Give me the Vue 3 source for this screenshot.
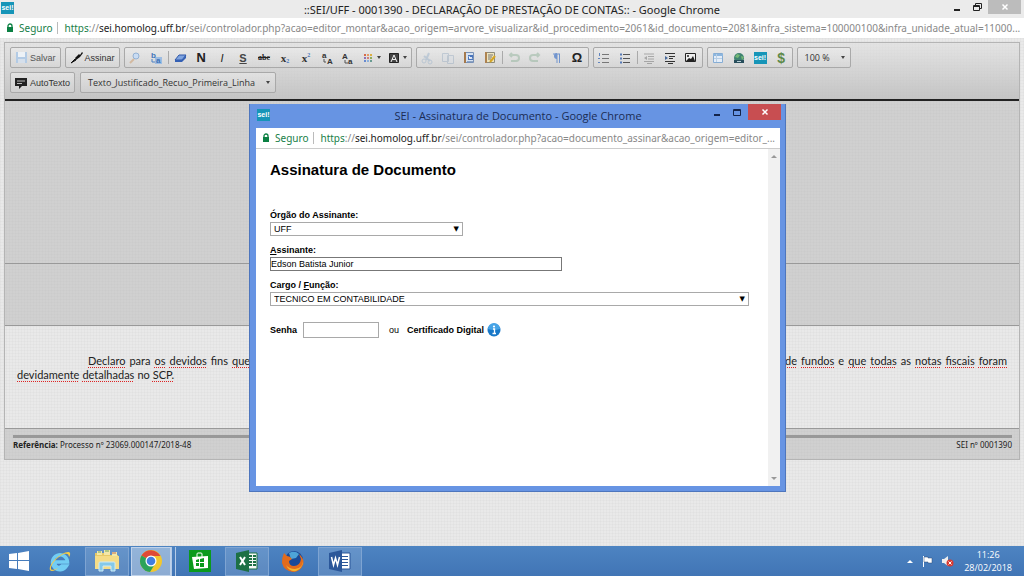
<script setup>
import { ref } from 'vue'

const orgao = ref('UFF')
const assinante = ref('Edson Batista Junior')
const cargo = ref('TECNICO EM CONTABILIDADE')
const senha = ref('')

const lineStart = [
  ['Declaro', 1], ['para', 0], ['os', 1], ['devidos', 1], ['fins', 0], ['que', 1],
]
const lineEnd = [
  ['de', 1], ['fundos', 1], ['e', 0], ['que', 1], ['todas', 1], ['as', 0], ['notas', 1], ['fiscais', 1], ['foram', 1],
]
const lineLast = [['devidamente', 1], ['detalhadas', 1], ['no', 0], ['SCP.', 1]]
</script>

<template>
  <div class="desktop">
    <header class="titlebar">
      <span class="sei">sei!</span>
      <h1>::SEI/UFF - 0001390 - DECLARAÇÃO DE PRESTAÇÃO DE CONTAS:: - Google Chrome</h1>
      <div class="controls">
        <button aria-label="Minimizar"><svg width="12" height="12"><path d="M3 9h6" stroke="#222" stroke-width="2" /></svg></button>
        <button aria-label="Restaurar"><svg width="12" height="12" fill="none" stroke="#222"><path d="M2.500 4.500h6v5h-6zM2 5.500h7M4.500 4v-1.500h6v5H9" /></svg></button>
        <button class="close" aria-label="Fechar"><svg width="8" height="8"><path d="M1.500 1.500l5 5M6.500 1.500l-5 5" stroke="#fff" stroke-width="1.500" /></svg></button>
      </div>
    </header>

    <div class="address">
      <svg class="lock" width="8" height="10"><path d="M2 5V3a2 2 0 0 1 4 0v2" fill="none" stroke="#0b8043" stroke-width="1.300" /><path d="M1 4h6v5H1z" fill="#0b8043" /></svg>
      <span class="secure">Seguro</span>
      <span class="url"><b>https</b>://<i>sei.homolog.uff.br</i>/sei/controlador.php?acao=editor_montar&amp;acao_origem=arvore_visualizar&amp;id_procedimento=2061&amp;id_documento=2081&amp;infra_sistema=100000100&amp;infra_unidade_atual=11000...</span>
    </div>

    <main class="page">
      <div class="editor">
        <div class="toolbar">
          <div class="row">
            <button class="group wide faded">
              <svg width="13" height="13"><path d="M1 1h11v11H1z" fill="#b3cbe5" /><path d="M3 1h7v5H3z" fill="#edf2f7" /><path d="M3 8h7v4H3z" fill="#d5dfeb" /></svg>
              Salvar
            </button>
            <button class="group wide">
              <svg width="13" height="13"><path d="M1 12l4-4 1 1z" fill="#111" stroke="#111" /><path d="M5 7l4-4 1 1 2-3 1 1-3 4-4 3z" fill="#111" /></svg>
              Assinar
            </button>

            <div class="group">
              <button class="tool" aria-label="Localizar"><svg width="14" height="14"><path d="M2 12l4-4" stroke="#d3b9a0" stroke-width="2" /><circle cx="8" cy="5" r="3" fill="#c9dcf3" stroke="#93b1d4" /></svg></button>
              <button class="tool" aria-label="Substituir"><svg width="14" height="14"><path d="M6 6h7v7H6z" fill="#9dbce2" /><text x="2" y="7" class="g blue">b</text><text x="7" y="12" class="g blue">a</text><path d="M3 8v3h3" fill="none" stroke="#4a80c4" /></svg></button>
              <span class="sep"></span>
              <button class="tool" aria-label="Remover formatação"><svg width="14" height="14"><path d="M2 9l4-5h7l-4 5z" fill="#7ea4e0" stroke="#2f57a8" /><path d="M2 9h7l4-5v3l-4 4H2z" fill="#3460b4" /></svg></button>
              <button class="tool strong">N</button>
              <button class="tool italic">I</button>
              <button class="tool under">S</button>
              <button class="tool strike">abc</button>
              <button class="tool serif">x<sub>2</sub></button>
              <button class="tool serif">x<sup>2</sup></button>
              <button class="tool" aria-label="Maiúsculas"><svg width="14" height="14"><text x="2" y="7" class="g">a</text><text x="7" y="13" class="g">A</text><path d="M4 8v3h2" fill="none" stroke="#555" /></svg></button>
              <button class="tool" aria-label="Minúsculas"><svg width="14" height="14"><text x="1" y="8" class="g">A</text><text x="7" y="13" class="g">a</text><path d="M4 9v3h3" fill="none" stroke="#555" /></svg></button>
              <button class="tool drop" aria-label="Cor do texto"><svg width="12" height="14"><path d="M2 3h2v2H2z" fill="#d76a4a" /><path d="M5 3h2v2H5z" fill="#e49b64" /><path d="M8 3h2v2H8z" fill="#dcae42" /><path d="M2 6h2v2H2z" fill="#8d70b7" /><path d="M5 6h2v2H5z" fill="#d38178" /><path d="M8 6h2v2H8z" fill="#8fab5b" /><path d="M2 9h2v2H2z" fill="#678ad0" /><path d="M5 9h2v2H5z" fill="#8cb1dc" /><path d="M8 9h2v2H8z" fill="#699b91" /></svg><span class="caret"></span></button>
              <button class="tool drop" aria-label="Cor de fundo"><svg width="12" height="14"><path d="M1.500 2.500h9v9h-9z" fill="#444" stroke="#222" /><path d="M3 11l3-7 3 7M4 8.500h4" fill="none" stroke="#eee" /></svg><span class="caret"></span></button>
            </div>

            <div class="group">
              <button class="tool faint" aria-label="Recortar"><svg width="14" height="14" fill="none" stroke="#8aa8c7"><path d="M9 2L6 9M4 5l6 5" stroke-width="2" /><circle cx="4" cy="10" r="2" /><circle cx="10" cy="11" r="2" /></svg></button>
              <button class="tool faint" aria-label="Copiar"><svg width="14" height="14" fill="#d9dfe7" stroke="#8ea5bd"><path d="M1.500 2.500h6v8h-6zM6.500 4.500h6v8h-6z" /></svg></button>
              <button class="tool" aria-label="Colar como texto"><svg width="14" height="14"><path d="M2.500 1.500h9v10h-9z" fill="#d7e2f0" stroke="#7891b6" /><path d="M2 1h2v11H2z" fill="#a5794c" /><path d="M6 4h5v5H6z" fill="#4975bc" /><path d="M5 10.500h6" stroke="#8ba2c4" /><path d="M7 5l1 3 1-2 1 2" fill="none" stroke="#fff" /></svg></button>
              <button class="tool" aria-label="Colar do Word"><svg width="14" height="14"><path d="M2.500 1.500h9v10h-9z" fill="#eee4bd" stroke="#8d8b7c" /><path d="M2 1h2v11H2z" fill="#ad8250" /><path d="M5 4h5M5 6h4M5 8h3" stroke="#777" /><path d="M7 11l5-6" stroke="#d5a525" stroke-width="2" /></svg></button>
              <span class="sep"></span>
              <button class="tool faint" aria-label="Desfazer"><svg width="14" height="14"><path d="M3 4h6a3 3 0 0 1 0 6H4M5 2L3 4l2 2" fill="none" stroke="#80a98c" stroke-width="2" /></svg></button>
              <button class="tool faint" aria-label="Refazer"><svg width="14" height="14"><path d="M11 4H5a3 3 0 0 0 0 6h5M9 2l2 2-2 2" fill="none" stroke="#80a98c" stroke-width="2" /></svg></button>
              <button class="tool" aria-label="Mostrar blocos"><svg width="14" height="14"><path d="M4 3h7M8 3v9M10.500 3v9" stroke="#7295ce" /><path d="M8 2v6a3 3 0 0 1 0-6" fill="#7295ce" /></svg></button>
              <button class="tool omega">Ω</button>
            </div>

            <div class="group">
              <button class="tool" aria-label="Lista numerada"><svg width="14" height="14"><path d="M5 3.500h7M5 7.500h7M5 11.500h7" stroke="#777" /><path d="M2.500 2v3M1 7.500h2M1 11.500h2" stroke="#6185bf" /></svg></button>
              <button class="tool" aria-label="Lista"><svg width="14" height="14"><path d="M5 3.500h7M5 7.500h7M5 11.500h7" stroke="#555" /><path d="M2 3.500h2M2 7.500h2M2 11.500h2" stroke="#587bb5" stroke-width="2" /></svg></button>
              <span class="sep"></span>
              <button class="tool faint" aria-label="Diminuir recuo"><svg width="14" height="14"><path d="M2 3h10M6 5.500h6M6 8h6M2 10.500h10M5 12.500h5" stroke="#555" /><path d="M5 5v4L2 7z" fill="#555" /></svg></button>
              <button class="tool" aria-label="Aumentar recuo"><svg width="14" height="14"><path d="M2 2.500h10M6 5.500h6M6 7.500h4M2 10.500h10M5 12.500h5" stroke="#333" /><path d="M2 5v4l3-2z" fill="#46699b" /></svg></button>
              <button class="tool" aria-label="Imagem"><svg width="14" height="14"><path d="M1.500 2.500h10v8h-10z" fill="#eee" stroke="#222" /><path d="M2 10l3-3 2 1 2-3 2 5z" fill="#222" /><circle cx="4" cy="5" r="1" fill="#222" /></svg></button>
            </div>

            <div class="group">
              <button class="tool" aria-label="Tabela"><svg width="14" height="14"><path d="M2.500 2.500h9v9h-9z" fill="#e4edf8" stroke="#86add4" /><path d="M2 4h10" stroke="#8db6de" stroke-width="2" /><path d="M5.500 3v8M3 7.500h8" stroke="#b7cfe6" /></svg></button>
              <button class="tool" aria-label="Link"><svg width="14" height="14"><circle cx="7" cy="7" r="5" fill="#3e8370" /><path d="M5 3l3 1-2 3-3-1zM9 5l3 1-2 3z" fill="#75b875" /><path d="M2 9h10v3H2z" fill="#284e5c" /><path d="M5 10.500h4" stroke="#b7cfd7" /></svg></button>
              <button class="tool" aria-label="Link SEI"><span class="sei">sei!</span></button>
              <button class="tool dollar">$</button>
            </div>

            <button class="group combo">100 %<span class="caret"></span></button>
          </div>

          <div class="row">
            <button class="group wide">
              <svg width="13" height="14"><path d="M0 2h12v8H7l-3 3v-3H0z" fill="#222" /><path d="M2 5h8M2 7.500h5" stroke="#bbb" /></svg>
              AutoTexto
            </button>
            <button class="group combo">Texto_Justificado_Recuo_Primeira_Linha<span class="caret"></span></button>
          </div>
        </div>

        <section class="block head"></section>
        <section class="block second"></section>
        <section class="block body">
          <div class="line">
            <p class="indent"><span v-for="(w, i) in lineStart" :key="i" :class="{ bad: w[1] }">{{ w[0] }}</span></p>
            <p><span v-for="(w, i) in lineEnd" :key="i" :class="{ bad: w[1] }">{{ w[0] }}</span></p>
          </div>
          <p class="last"><span v-for="(w, i) in lineLast" :key="i" :class="{ bad: w[1] }">{{ w[0] }}</span></p>
        </section>
        <section class="block foot">
          <hr>
          <div class="refs">
            <span><strong>Referência:</strong> Processo nº 23069.000147/2018-48</span>
            <span>SEI nº 0001390</span>
          </div>
        </section>
      </div>
    </main>

    <div class="dialog" role="dialog" aria-labelledby="dialog-title">
      <header class="dialog-bar">
        <span class="sei">sei!</span>
        <h2 id="dialog-title">SEI - Assinatura de Documento - Google Chrome</h2>
        <div class="controls">
          <button aria-label="Minimizar"><svg width="12" height="12"><path d="M3 9h6" stroke="#14244a" stroke-width="2" /></svg></button>
          <button aria-label="Maximizar"><svg width="12" height="12" fill="none" stroke="#14244a"><path d="M2.500 3.500h7v6h-7zM2 4.500h8" /></svg></button>
          <button class="close" aria-label="Fechar"><svg width="8" height="8"><path d="M1.500 1.500l5 5M6.500 1.500l-5 5" stroke="#fff" stroke-width="1.500" /></svg></button>
        </div>
      </header>
      <div class="address">
        <svg class="lock" width="8" height="10"><path d="M2 5V3a2 2 0 0 1 4 0v2" fill="none" stroke="#0b8043" stroke-width="1.300" /><path d="M1 4h6v5H1z" fill="#0b8043" /></svg>
        <span class="secure">Seguro</span>
        <span class="url"><b>https</b>://<i>sei.homolog.uff.br</i>/sei/controlador.php?acao=documento_assinar&amp;acao_origem=editor_...</span>
      </div>
      <div class="dialog-body">
        <form class="form" @submit.prevent>
          <h3>Assinatura de Documento</h3>
          <div class="field short">
            <label for="orgao">Órgão do Assinante:</label>
            <span class="select"><select id="orgao" v-model="orgao"><option>UFF</option></select></span>
          </div>
          <div class="field medium">
            <label for="assinante"><u>A</u>ssinante:</label>
            <input id="assinante" v-model="assinante" type="text">
          </div>
          <div class="field">
            <label for="cargo">Cargo / <u>F</u>unção:</label>
            <span class="select"><select id="cargo" v-model="cargo"><option>TECNICO EM CONTABILIDADE</option></select></span>
          </div>
          <div class="auth">
            <label for="senha">Senha</label>
            <input id="senha" v-model="senha" type="password">
            <span class="or">ou</span>
            <a href="#">Certificado Digital</a>
            <svg width="14" height="14"><circle cx="7" cy="7" r="6.500" fill="#1878c8" /><path d="M1 6a6 6 0 0 1 12 0q-6 2-12 0z" fill="#48a4e6" /><path d="M6 6h1.500v4.500M5.500 10.500h3.500" fill="none" stroke="#fff" stroke-width="1.300" /><circle cx="7" cy="3.500" r="1.100" fill="#fff" /></svg>
          </div>
        </form>
        <div class="scroll">
          <svg width="6" height="4"><path d="M0 4l3-3 3 3z" fill="#999" /></svg>
          <svg width="6" height="4"><path d="M0 0l3 3 3-3z" fill="#999" /></svg>
        </div>
      </div>
    </div>

    <footer class="taskbar">
      <button class="task start" aria-label="Iniciar"><svg width="20" height="20" fill="#fff"><path d="M0 3l8-1v7H0zM9 2l11-2v9H9zM0 10h8v8l-8-1zM9 10h11v10L9 18z" /></svg></button>
      <button class="task" aria-label="Internet Explorer"><svg width="24" height="24"><path d="M6 13h13.500A7.500 7.500 0 1 0 18.500 17h-4.500A4 4 0 0 1 7 14" fill="none" stroke="#72cdf4" stroke-width="3.500" /><path d="M2 21C0 15 14 2 21 3c2 1 1 4 0 5 0-3-2-4-5-3C10 7 2 16 3 20c1 2 5 0 7-1-3 3-7 4-8 2z" fill="#f5cc45" /></svg></button>
      <button class="task open" aria-label="Explorador de Arquivos"><svg width="26" height="24"><path d="M1 4h9l2 2h12v14H1z" fill="#e6ca69" /><path d="M3 2h5v4H3zM10 1h6v5h-6zM18 3h5v4h-5z" fill="#f3e7a9" /><path d="M4 3h3M11 2h4" stroke="#69a65c" /><path d="M18 4h4" stroke="#c46e52" /><path d="M1 7h24v13H1z" fill="#f5dc87" /><path d="M5 22v-8q0-1 1-1h14q1 0 1 1v8h-4v-5H9v5z" fill="#85c9e9" stroke="#cdebf7" /></svg></button>
      <button class="task open active" aria-label="Google Chrome"><svg width="22" height="22"><circle cx="11" cy="11" r="11" fill="#f2c72f" /><path d="M11 11L1.500 5.500A11 11 0 0 1 20.500 6H11z" fill="#df4a37" /><path d="M11 11L1.500 5.500A11 11 0 0 0 10 22l5-8z" fill="#2ca35a" /><circle cx="11" cy="11" r="5.500" fill="#fff" /><circle cx="11" cy="11" r="4.300" fill="#427ee0" /></svg></button>
      <span class="stack"></span>
      <button class="task" aria-label="Loja"><svg width="22" height="22"><path d="M0 0h22v22H0z" fill="#0a9a1c" /><path d="M3 7l16-1v12L5 19z" fill="#fff" /><path d="M8 7V4q0-1 1-1h3q1 0 1 1v3" fill="none" stroke="#fff" /><path d="M7 10l3-1v3H7zM11 9l4-1v4h-4zM7 13h3v3H7zM11 13h4v4h-4z" fill="#0a9a1c" /></svg></button>
      <button class="task open" aria-label="Excel"><svg width="22" height="22"><path d="M11 3h10v16H11z" fill="#f4f8f5" stroke="#1d7044" /><path d="M13 6h3M17 6h3M13 9h3M17 9h3M13 12h3M17 12h3M13 15h3M17 15h3" stroke="#1d7044" stroke-width="2" /><path d="M0 3l13-3v22L0 19z" fill="#1d7044" /><path d="M4 7l5 8M9 7l-5 8" stroke="#fff" stroke-width="2" /></svg></button>
      <button class="task" aria-label="Firefox"><svg width="22" height="22"><circle cx="12" cy="10" r="9" fill="#1a4a99" /><path d="M7 3q6-3 10 1l-3 4-5 1z" fill="#4ea4d8" /><path d="M2 3l3 3q3 0 5 3l-3 2q0 5 5 5 6 0 7-7l-2-5q6 5 4 11-3 7-10 7Q2 21 0 13 0 7 2 3z" fill="#e36b1c" /><path d="M21 8q1 10-8 11-6 0-9-4 3 7 10 6 8-3 7-13z" fill="#f5b52e" /></svg></button>
      <button class="task open" aria-label="Word"><svg width="22" height="22"><path d="M11 3h10v16H11z" fill="#fff" stroke="#2b579a" /><path d="M13 6.500h6M13 9.500h6M13 12.500h6M13 15.500h6" stroke="#2b579a" /><path d="M0 3l13-3v22L0 19z" fill="#2b579a" /><path d="M2.500 7l2 8 2-7 2 7 2-8" fill="none" stroke="#fff" stroke-width="1.500" /></svg></button>
      <div class="tray">
        <svg width="6" height="4"><path d="M0 4l3-3 3 3z" fill="#fff" /></svg>
        <svg width="12" height="12"><path d="M2.500 1v11" stroke="#fff" /><path d="M3 2h4v1h4v5H7V7H3z" fill="#fff" stroke="#294b77" stroke-width=".5" /></svg>
        <svg width="13" height="12"><path d="M1 4h2l4-3v10L3 8H1z" fill="#eee" /><circle cx="9" cy="8" r="3.500" fill="#d93a32" /><path d="M7.500 6.500l3 3M10.500 6.500l-3 3" stroke="#fff" /></svg>
        <time>11:26<br>28/02/2018</time>
      </div>
    </footer>
  </div>
</template>

<style>
body { overflow: hidden; }
</style>

<style scoped>
.desktop {
  --ui: "Noto Sans", "Open Sans", sans-serif;
  --small: "Open Sans", "Noto Sans", sans-serif;
  --form: "Liberation Sans", Arial, sans-serif;
  position: relative;
  display: flex;
  flex-direction: column;
  height: 100vh;
  min-height: 500px;
  font-family: var(--ui);
  font-size: 11px;
  color: #222;
}
.desktop * { box-sizing: border-box; }
button { padding: 0; border: 0; background: none; font: inherit; color: inherit; }
h1, h2, h3, p { margin: 0; font-weight: 400; }
svg { display: block; flex: none; }

.titlebar { position: relative; display: flex; align-items: center; justify-content: center; height: 18px; background: #ebebeb; }
.titlebar h1 { font-size: 11px; line-height: 17px; white-space: nowrap; }
.sei { width: 13px; height: 12px; background: #1695b8; color: #fff; font: bold 7px/11px var(--form); text-align: center; overflow: hidden; }
.titlebar > .sei { position: absolute; left: 1px; top: 2px; }
.controls { position: absolute; right: 3px; top: 0; display: flex; align-items: center; gap: 8px; }
.controls button { display: grid; place-items: center; height: 14px; }
.controls .close { width: 33px; margin-left: -3px; background: #bcbcbc; }

.address { display: flex; align-items: center; height: 20px; padding: 0 6px; background: #fff; font-size: 10px; color: #888; white-space: nowrap; }
.secure { margin-left: 5px; padding-right: 5px; border-right: 1px solid #bbb; line-height: 12px; color: #188048; }
.url { margin-left: 6px; line-height: 12px; }
.url b { font-weight: 400; color: #188048; }
.url i { font-style: normal; color: #222; }

.page {
  flex: 1;
  padding: 4px 4px 0;
  background-color: #e9e9e9;
  background-image:
    repeating-linear-gradient(90deg, rgba(0, 0, 0, .02) 0 1px, transparent 1px 3px),
    repeating-linear-gradient(rgba(0, 0, 0, .02) 0 1px, transparent 1px 3px);
}
.editor { border: 1px solid #b4b4b4; }
.toolbar { display: flex; flex-direction: column; gap: 4px; padding: 4px 5px 6px; background: linear-gradient(rgba(224, 224, 224, .6), rgba(188, 188, 188, .8)); border-bottom: 2px solid #222; }
.row { display: flex; gap: 5px; }
.row:first-child { gap: 4px; }
.group { display: flex; align-items: center; height: 21px; border: 1px solid #a9a9a9; border-radius: 2px; background: linear-gradient(rgba(240, 240, 240, .5), rgba(215, 215, 215, .5)); }
.wide { gap: 2px; padding: 0 4px; font: 9px/12px var(--form); color: #333; }
.faded { color: #555; }
.combo { gap: 11px; padding: 0 5px 0 7px; font: 9px/12px var(--small); color: #333; }
.tool { display: flex; align-items: center; justify-content: center; width: 21px; height: 19px; }
.drop { width: 26px; gap: 3px; }
.caret { border: 2px solid transparent; border-top: 3px solid #444; border-bottom: 0; }
.sep { width: 1px; height: 13px; margin: 0 1px; background: #aaa; }
.faint svg { opacity: .4; }
.g { font: bold 8px var(--form); fill: #333; }
.blue { fill: #3f73b8; }
.strong { font: bold 12px var(--ui); }
.italic { font: italic 11px var(--form); }
.under { font: bold 11px var(--form); text-decoration: underline; color: #444; }
.strike { font: bold 8px "Liberation Serif", serif; text-decoration: line-through; }
.serif { font: bold 11px/12px "Liberation Serif", serif; color: #333; }
.serif sub, .serif sup { font-size: 6px; line-height: 6px; color: #4879bb; }
.serif sub { align-self: flex-end; padding-bottom: 3px; }
.serif sup { align-self: flex-start; padding-top: 4px; }
.omega { font: bold 13px var(--form); }
.dollar { font: bold 14px var(--form); color: #5d8948; }

.block { border-bottom: 1px solid #999; background: rgba(175, 175, 175, .42); }
.head { height: 163px; }
.second { height: 62px; }
.body { height: 103px; padding: 28px 12px 0; background: none; font: 11px/14px Lato, "Noto Sans", sans-serif; color: #222; }
.line { display: flex; justify-content: space-between; }
.body p { display: flex; gap: 4px; }
.indent { padding-left: 71px; }
.body .last { gap: 3px; }
.bad { text-decoration: underline dotted #d22 1px; text-decoration-skip-ink: none; text-underline-offset: 2px; }
.foot { padding: 6px 7px 9px 8px; border-bottom: 0; }
.foot hr { height: 3px; margin: 0 0 1px; border: 0; background: #999; }
.refs { display: flex; justify-content: space-between; font: 8px/11px var(--ui); }

.dialog { position: absolute; left: 249px; right: 238px; top: 104px; display: flex; flex-direction: column; height: 388px; padding: 0 5px 5px 6px; border: 1px solid #4e76bd; border-top: 0; background: #6794e3; }
.dialog-bar { position: relative; display: flex; align-items: center; justify-content: center; flex: none; height: 24px; color: #1b2c54; }
.dialog-bar h2 { font: 11px/24px var(--small); }
.dialog-bar > .sei { position: absolute; left: 1px; top: 5px; }
.dialog .controls { right: -1px; }
.dialog .close { height: 16px; background: #c84e51; }
.dialog .address { flex: none; border-bottom: 1px solid #ccc; height: 21px; }
.dialog-body { flex: 1; display: flex; background: #fff; }
.form { flex: 1; padding: 11px 19px 0 14px; font: 9px/11px var(--form); color: #000; }
.form h3 { margin-bottom: 29px; font: bold 15px/20px var(--form); }
.field { margin-bottom: 8px; }
.short { width: 193px; }
.medium { width: 292px; }
.form label, .form a { display: block; font-weight: 700; color: #000; text-decoration: none; }
.field label { margin-bottom: 1px; line-height: 12px; }
.select { position: relative; display: block; }
.select::after { content: "▼"; position: absolute; right: 4px; top: 0; font: 7px/14px "DejaVu Sans", sans-serif; pointer-events: none; }
.form select, .form input { display: block; width: 100%; height: 14px; margin: 0; padding: 0 3px; border: 1px solid #a9a9a9; border-radius: 0; background: #fff; color: #000; font: 9px/12px var(--form); appearance: none; outline: 0; }
.medium input { padding: 0; border-color: #777; }
.auth { display: flex; align-items: center; padding-top: 8px; }
.form .auth input { width: 76px; height: 16px; margin: 0 10px 0 6px; }
.or { margin-right: 8px; }
.auth svg { margin-left: 3px; }
.scroll { display: flex; flex-direction: column; align-items: center; justify-content: space-between; width: 12px; padding: 5px 0; background: #f1f1f1; }

.taskbar { display: flex; align-items: center; height: 30px; background: linear-gradient(#4d84c2, #4175b5); }
.task { display: grid; place-items: center; width: 44px; height: 29px; margin-right: 1px; }
.start { width: 37px; }
.open { margin: 0 2px; border: 1px solid #7ea4d2; background: rgba(255, 255, 255, .14); }
.active { width: 40px; margin: 0; background: rgba(255, 255, 255, .4); border-color: #bfd2ea; }
.stack { width: 5px; height: 29px; margin-right: 2px; border: solid #b4cbe7; border-width: 0 1px; }
.tray { display: flex; align-items: center; gap: 10px; margin-left: auto; padding-right: 12px; color: #fff; }
.tray svg + svg { margin-left: -2px; }
.tray time { font: 9px/13px var(--small); text-align: center; }
</style>
